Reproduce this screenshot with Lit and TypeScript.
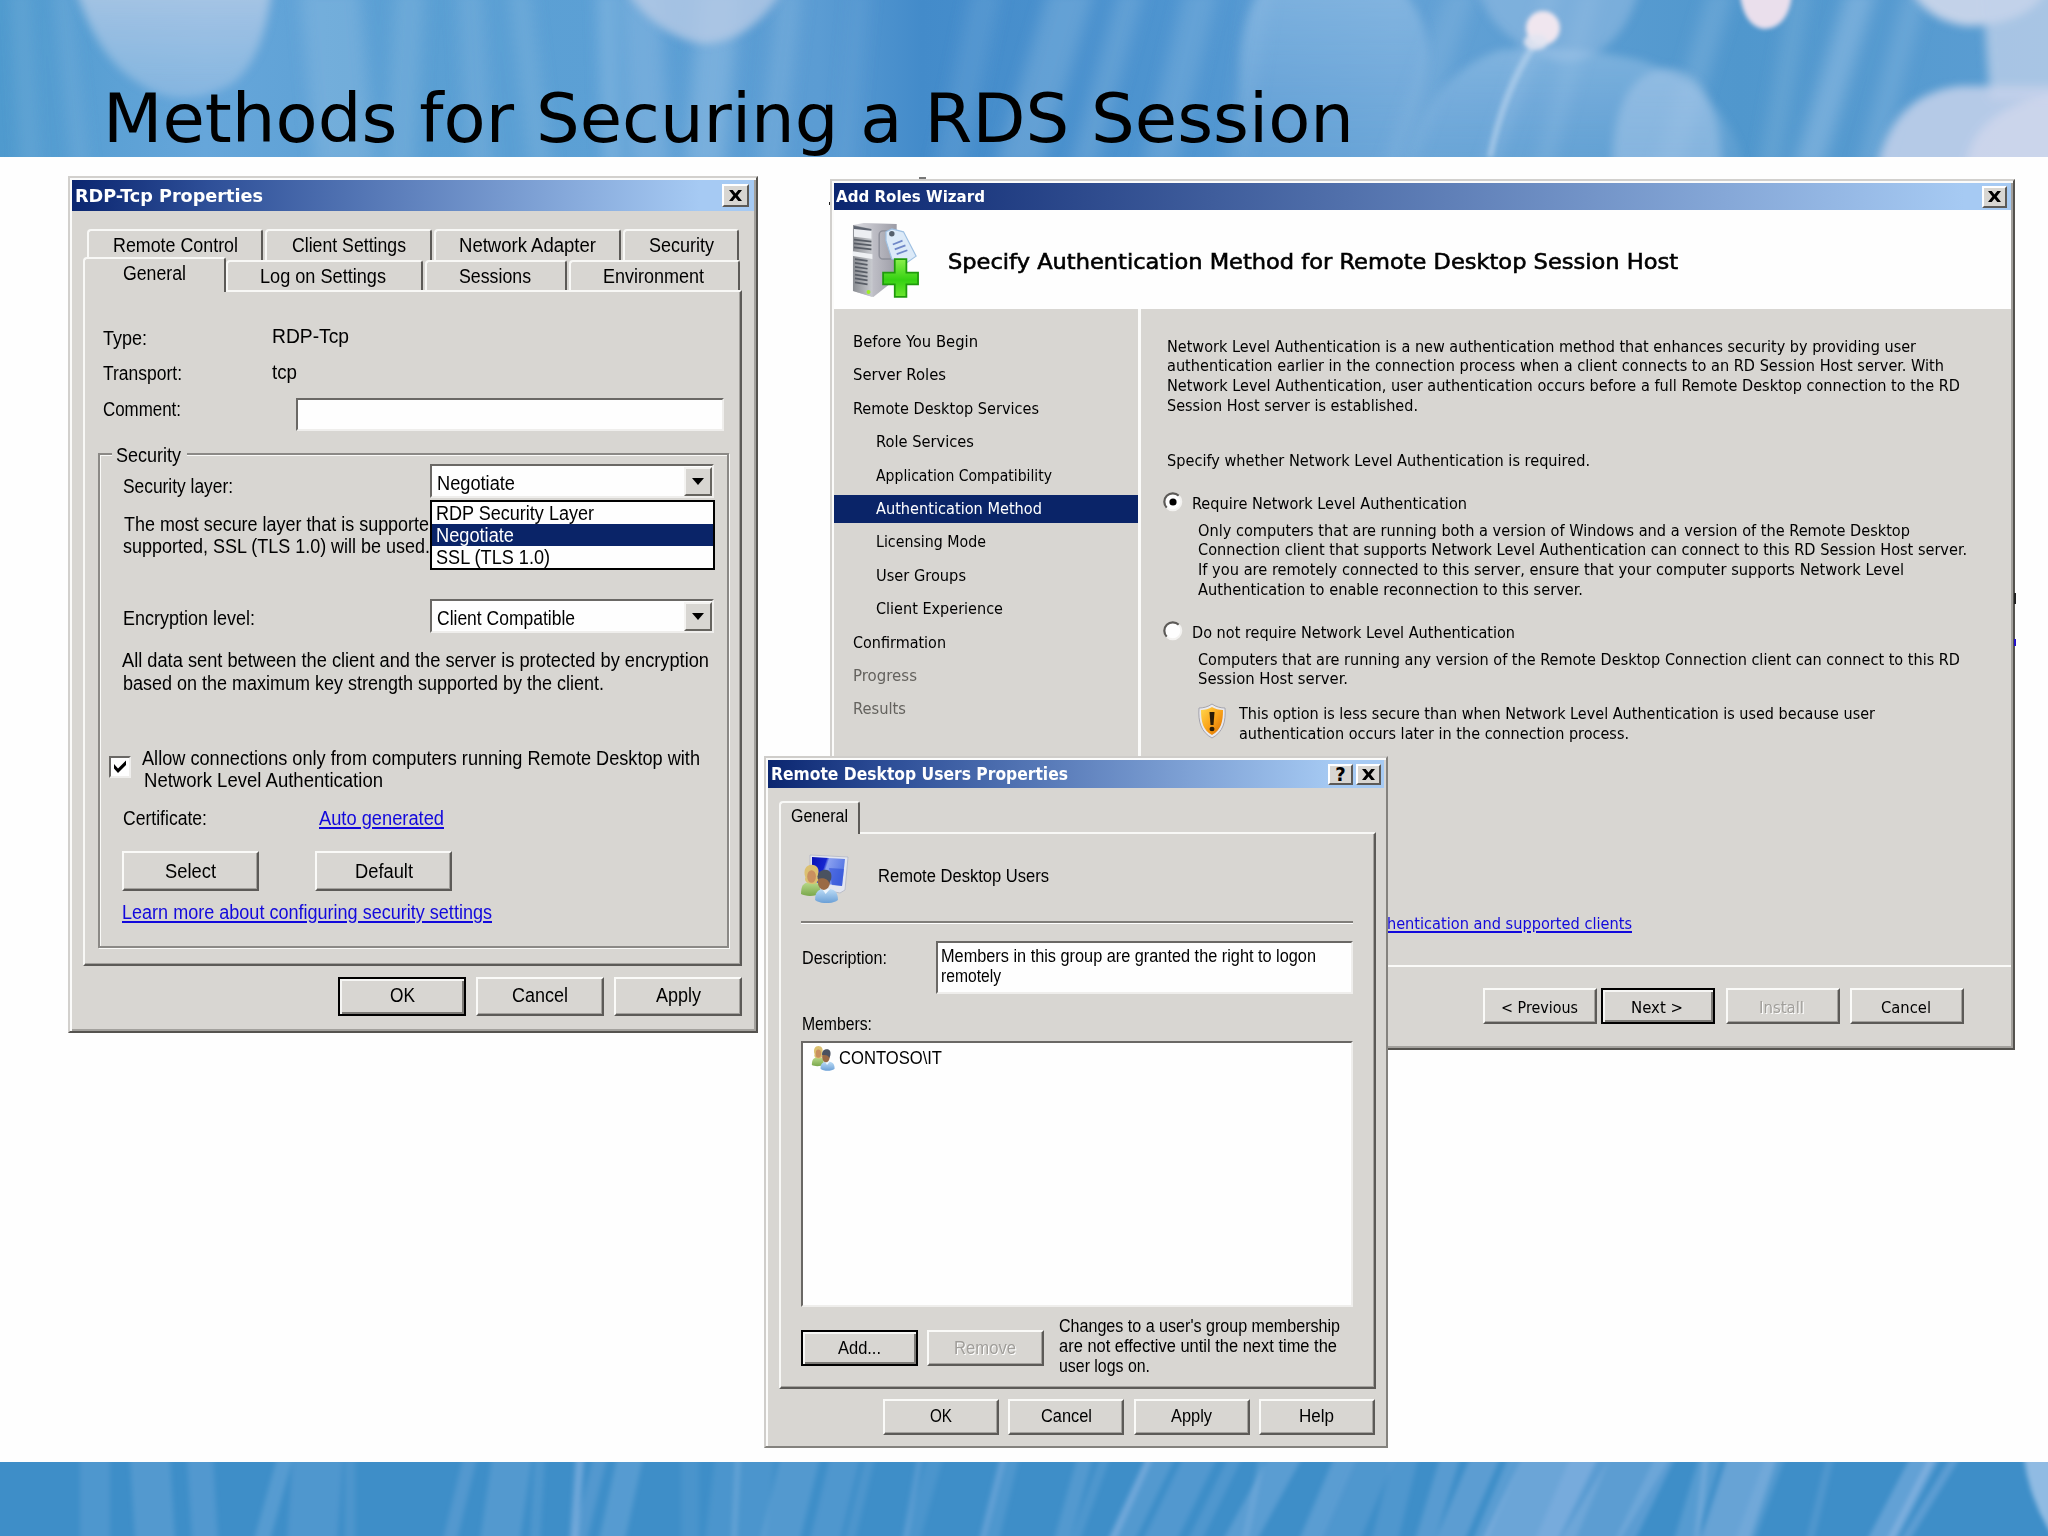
import { LitElement, html, svg, css } from "lit";
import { customElement, property } from "lit/decorators.js";

/* A single line of text squeezed or stretched to a given width. */
@customElement("fit-text")
class FitText extends LitElement {
  @property({ type: Number }) w = 0;
  @property({ type: Number }) indent = 0;
  @property({ type: Number }) gap = 0;
  static styles = css`
    :host { display: block; flex: none; white-space: nowrap; height: 22px; line-height: 22px; }
    .t { display: inline-block; transform-origin: 0 0; text-decoration: inherit; text-underline-offset: inherit; }
  `;
  render() { return html`<span class="t"><slot></slot></span>`; }
  updated() {
    this.style.width = `${this.w}px`;
    this.style.marginLeft = `${this.indent}px`;
    this.style.marginTop = `${this.gap}px`;
    this.fit();
    document.fonts.ready.then(() => this.fit());
  }
  fit() {
    const t = this.renderRoot.querySelector(".t") as HTMLElement;
    if (!t) return;
    t.style.transform = "none";
    const n = t.getBoundingClientRect().width;
    if (n > 0) t.style.transform = `scaleX(${this.w / n})`;
  }
}

const t = (text: string, w: number, indent = 0, gap = 0, cls = "") =>
  html`<fit-text class=${cls} .w=${w} .indent=${indent} .gap=${gap}>${text}</fit-text>`;

const btn = (text: string, w: number, cls = "") =>
  html`<div class="btn ${cls}">${t(text, w)}</div>`;

const closeGlyph = html`<svg class="glyph" viewBox="0 0 16 14"><path d="M1 1h4l3 3.800 3-3.800h4l-4.700 6 4.700 6h-4l-3-3.800-3 3.800H1l4.700-6z" fill="#000"/></svg>`;
const arrow = html`<span class="arrow"><svg width="12" height="8" viewBox="0 0 12 8"><path d="M0 0h12L6 7z" fill="#000"/></svg></span>`;

const people = (id: string) => svg`
  <defs>
    <linearGradient id="${id}g" x1="0" y1="0" x2="0" y2="1"><stop offset="0" stop-color="#b9d98a"/><stop offset="1" stop-color="#7aa84c"/></linearGradient>
    <linearGradient id="${id}b" x1="0" y1="0" x2="0" y2="1"><stop offset="0" stop-color="#bcdcf6"/><stop offset="1" stop-color="#6a9fd6"/></linearGradient>
  </defs>
  <path d="M0 37c0-10 3-13 8-14h9c3 1 5 4 5 13-5 4-17 4-22 1z" fill="url(#${id}g)"/>
  <path d="M5 17c-3-9 1-15 7-15s10 5 7 14c2 5-1 9-6 9s-10-3-8-8z" fill="#dcc070"/>
  <ellipse cx="12" cy="16" rx="5" ry="7.500" fill="#c9905f"/>
  <path d="M16 44c0-9 3-12 9-13h8c6 1 9 5 9 13-6 5-20 5-26 0z" fill="url(#${id}b)"/>
  <path d="M24 31l4 6 5-6z" fill="#eef6fc"/>
  <ellipse cx="26" cy="22" rx="7" ry="10" fill="#9a6a44"/>
  <path d="M19 19c-1-8 4-11 9-11s8 5 6 12l-2 4c-1-5-7-7-13-5z" fill="#4a5260"/>`;

const serverIcon = html`<svg class="server" viewBox="0 0 70 78">
  <defs>
    <linearGradient id="sf" x1="0" x2="1"><stop offset="0" stop-color="#8a8d92"/><stop offset="1" stop-color="#c9cbd0"/></linearGradient>
    <linearGradient id="ss" x1="0" x2="1"><stop offset="0" stop-color="#dcdce2"/><stop offset="1" stop-color="#9c9ca6"/></linearGradient>
    <linearGradient id="pg" x1="0" x2="0" y1="0" y2="1"><stop offset="0" stop-color="#8cf04c"/><stop offset=".55" stop-color="#35d112"/><stop offset="1" stop-color="#6be62e"/></linearGradient>
  </defs>
  <path d="M1 3L12 1l34 1v56L22 77 1 71z" fill="url(#ss)"/>
  <path d="M1 3l20 4v70L1 71z" fill="url(#sf)"/>
  <path d="M2 5l18 3v9L2 15z" fill="#eceef2"/><path d="M2 4l18 3v2L2 7z" fill="#5e6470"/>
  <path d="M2 18l18 2M2 22l18 2M2 26l18 2M3 38l13 2M3 42l13 2M3 46l13 2M3 50l13 2M3 54l13 2M3 58l13 2M3 62l13 2" stroke="#585d66" stroke-width="1.800"/>
  <path d="M1 30l20 3v5L1 35z" fill="#eef0f3"/>
  <circle cx="17" cy="72" r="2" fill="#9cf020"/>
  <rect x="28" y="9" width="18" height="29" rx="4" fill="none" stroke="#8c8e98" stroke-width="1.500"/>
  <path d="M35 10l6-3 12 3 13 25-10 7-15-4-6-19z" fill="#dceaf8" stroke="#9fc0e2" stroke-width="1.200"/>
  <circle cx="41" cy="12" r="2.800" fill="#55606c"/>
  <path d="M42 23l10-4M44 28l11-4M46 33l11-4" stroke="#7088c8" stroke-width="1.800"/>
  <path d="M44 38h12v14h12v12H56v13H44V64H32V52h12z" fill="url(#pg)" stroke="#1f9a0c" stroke-width="1.800"/>
</svg>`;

const shieldIcon = html`<svg class="shield" viewBox="0 0 30 36">
  <defs>
    <linearGradient id="sh" x1="0" x2="1" y1="0" y2="1"><stop offset="0" stop-color="#ffd850"/><stop offset=".5" stop-color="#fba51a"/><stop offset="1" stop-color="#d96c00"/></linearGradient>
  </defs>
  <path d="M15 1c4 3 9 4 13 4 1 14-2 24-13 30C4 29 1 19 2 5c4 0 9-1 13-4z" fill="#e9e9ee" stroke="#a4a4ae"/>
  <path d="M15 4c3 2 7 3 11 3 0 12-2 20-11 25C6 27 4 19 4 7c4 0 8-1 11-3z" fill="url(#sh)"/>
  <path d="M12.500 9h5l-1 13h-3z" fill="#2a1c08"/><ellipse cx="15" cy="26" rx="2.500" ry="2.300" fill="#2a1c08"/>
</svg>`;

/* [top x, bottom x, width, opacity] */
const topStreaks: number[][] = [
  [20, 30, 18, .18], [62, 80, 14, .2], [330, 345, 60, .28], [410, 400, 30, .24], [470, 480, 26, .2], [520, 540, 22, .22],
  [606, 612, 14, .45], [640, 650, 40, .3], [720, 705, 40, .38], [790, 770, 24, .24], [860, 845, 20, .1], [985, 950, 30, .16],
  [1070, 1020, 46, .28], [1130, 1085, 26, .24], [1200, 1160, 34, .24], [1260, 1235, 20, .18], [1460, 1400, 30, .2],
  [1550, 1490, 10, .4], [1590, 1545, 16, .25], [1720, 1670, 26, .25], [1800, 1770, 20, .22], [1860, 1810, 30, .4], [1915, 1870, 22, .25],
];
const bottomStreaks: number[][] = [
  [95, 95, 30, .2], [150, 155, 40, .26], [200, 205, 26, .24], [285, 262, 16, .3], [318, 312, 50, .22], [350, 350, 10, .18],
  [470, 450, 14, .25], [512, 500, 40, .26], [540, 535, 10, .2], [580, 574, 8, .6], [600, 580, 14, .25], [630, 612, 26, .3],
  [690, 690, 18, .14], [738, 734, 5, .4], [745, 735, 60, .16], [800, 780, 40, .26], [845, 825, 30, .22], [870, 850, 10, .18],
  [920, 905, 5, .35], [935, 912, 16, .16], [1003, 982, 6, .35], [1010, 990, 18, .2], [1085, 1062, 16, .26], [1105, 1075, 10, .2],
  [1150, 1112, 8, .6], [1165, 1125, 20, .26], [1200, 1160, 34, .24], [1235, 1195, 14, .22], [1285, 1240, 34, .34], [1262, 1245, 6, .3],
  [1345, 1310, 22, .34], [1375, 1340, 40, .22], [1405, 1385, 26, .22], [1450, 1425, 20, .32], [1485, 1450, 30, .36], [1515, 1480, 14, .34],
  [1560, 1520, 76, .55], [1590, 1555, 40, .35], [1640, 1590, 60, .36], [1665, 1625, 20, .35], [1710, 1685, 22, .3], [1706, 1697, 5, .5],
  [1752, 1725, 50, .5], [1775, 1745, 20, .26], [1830, 1810, 8, .22], [1925, 1882, 30, .45], [1932, 1890, 7, .6], [1955, 1905, 10, .35],
];
const streaks = (list: number[][], h: number, fill: string) =>
  list.map(([a, b, w, o]) => svg`<polygon points="${a - w / 2},-4 ${a + w / 2},-4 ${b + w / 2},${h + 4} ${b - w / 2},${h + 4}" fill=${fill} opacity=${o}/>`);

const header = html`<svg class="sky" viewBox="0 0 2048 157" preserveAspectRatio="none">
  <defs>
    <linearGradient id="hb"><stop offset="0" stop-color="#4f9ace"/><stop offset=".1" stop-color="#66a6da"/><stop offset=".2" stop-color="#5a9fd3"/><stop offset=".3" stop-color="#5ca0d5"/><stop offset=".4" stop-color="#5b9cd3"/><stop offset=".45" stop-color="#438bca"/><stop offset=".58" stop-color="#4f95d0"/><stop offset=".68" stop-color="#64a2d6"/><stop offset=".85" stop-color="#5097cd"/><stop offset="1" stop-color="#5c9ed3"/></linearGradient>
    <linearGradient id="fade" x1="0" x2="0" y1="0" y2="1"><stop offset="0" stop-color="#b9cde7"/><stop offset="1" stop-color="#9fc3e6" stop-opacity=".7"/></linearGradient>
    <linearGradient id="veil" x1="0" x2="0" y1="0" y2="1"><stop offset="0" stop-color="#a4c8ea"/><stop offset="1" stop-color="#86b5e0" stop-opacity=".4"/></linearGradient>
    <filter id="s1"><feGaussianBlur stdDeviation="8 3"/></filter>
    <filter id="s2"><feGaussianBlur stdDeviation="5 4"/></filter>
    <filter id="s4"><feGaussianBlur stdDeviation="2"/></filter>
  </defs>
  <rect width="2048" height="157" fill="url(#hb)"/>
  <g filter="url(#s1)">${streaks(topStreaks, 157, "#a9cbea")}</g>
  <g filter="url(#s2)">
    <path d="M75-12H272Q264 60 232 84Q180 112 140 84Q98 60 75-12z" fill="url(#fade)" opacity=".8"/>
    <path d="M624-12H784Q752 42 703 44Q655 36 624-12z" fill="#b6cbe6" opacity=".8"/>
    <path d="M1262-12H1400Q1430 20 1428 60Q1420 110 1390 170H1240V60Q1242 20 1262-12z" fill="url(#veil)" opacity=".5"/>
    <path d="M1478-12H1640Q1620 60 1560 62Q1490 40 1478-12z" fill="#9dc1e5" opacity=".5"/>
    <path d="M1405 172Q1425 76 1500 50Q1560 44 1640 60Q1730 90 1745 172z" fill="url(#veil)" opacity=".5"/>
    <path d="M1612 172Q1612 72 1668 68Q1720 74 1722 172z" fill="#abc9ea" opacity=".5"/>
    <path d="M1910-12H2048Q2030 25 1966 26Q1925 20 1910-12z" fill="#c9d5ea" opacity=".95"/>
    <path d="M1982-12H2068V100H1990z" fill="#c2d2ea" opacity=".75"/>
    <path d="M1876 172Q1890 94 1960 86H2068V172z" fill="#c6d2eb" opacity=".85"/>
    <path d="M1965 172Q1970 104 2068 92V172z" fill="#dcdcee" opacity=".55"/>
  </g>
  <g filter="url(#s4)">
    <path d="M1538 45Q1508 90 1493 157h-6Q1500 90 1530 45z" fill="#c6dcf1" opacity=".5"/>
    <ellipse cx="1543" cy="28" rx="17" ry="17" fill="#f0e6ef"/>
    <ellipse cx="1536" cy="42" rx="12" ry="8" fill="#e2e4f1" opacity=".9"/>
    <path d="M1740-5H1792Q1788 28 1764 29Q1744 26 1740-5z" fill="#eadfec"/>
  </g>
</svg>`;

const footer = html`<svg class="sea" viewBox="0 0 2048 74" preserveAspectRatio="none">
  <defs><filter id="s3"><feGaussianBlur stdDeviation="2.500 .5"/></filter></defs>
  <rect width="2048" height="74" fill="#3e8ec8"/>
  <g filter="url(#s3)">${streaks(bottomStreaks, 74, "#8fb8e4")}
    <path d="M2024-4h30v80Q2030 40 2024-4z" fill="#b4cfee" opacity=".7"/></g>
</svg>`;

const navItems: [string, number, string][] = [
  ["Before You Begin", 125, ""], ["Server Roles", 93, ""], ["Remote Desktop Services", 186, ""],
  ["Role Services", 98, "sub"], ["Application Compatibility", 176, "sub"], ["Authentication Method", 166, "sub on"],
  ["Licensing Mode", 110, "sub"], ["User Groups", 90, "sub"], ["Client Experience", 127, "sub"],
  ["Confirmation", 93, ""], ["Progress", 64, "dim"], ["Results", 53, "dim"],
];

@customElement("app-root")
class AppRoot extends LitElement {
  static styles = css`
    :host { display: block; width: 2048px; height: 1536px; }
    * { box-sizing: border-box; }
    .slide { position: relative; display: flex; flex-direction: column; width: 2048px; height: 1536px; background: #fefefe; overflow: hidden; color: #000; font: 19.5px "Liberation Sans", Arial, sans-serif; }
    .head { display: grid; height: 157px; flex: none; }
    .head > * { grid-area: 1 / 1; }
    .sky, .sea { display: block; width: 100%; height: 100%; }
    .title { margin: 0; font: 400 67.5px "DejaVu Sans", Verdana, sans-serif; padding: 78px 0 0 103px; height: 157px; z-index: 1; }
    .title fit-text { height: 80px; line-height: 81px; }
    .foot { height: 74px; margin-top: auto; flex: none; }
    .speck { position: absolute; background: #222; }
    .sp1 { left: 829px; top: 202px; width: 2px; height: 3px; }
    .sp2 { left: 919px; top: 177px; width: 7px; height: 2px; background: #777; }
    .sp3 { left: 2014px; top: 593px; width: 2px; height: 11px; }
    .sp4 { left: 2014px; top: 639px; width: 2px; height: 7px; background: #2412c8; }

    .win { position: absolute; display: flex; flex-direction: column; background: #d8d6d2; padding: 2px; border: 2px solid; border-color: #d2d0cd #55534f #55534f #d2d0cd; box-shadow: inset 2px 2px #fbfbfa, inset -2px -2px #a3a19d; }
    .w1 { left: 68px; top: 176px; width: 690px; height: 857px; }
    .w2 { left: 830px; top: 179px; width: 1185px; height: 871px; }
    .w3 { left: 764px; top: 756px; width: 624px; height: 692px; border-color: #cfcdca #84827e #84827e #cfcdca; box-shadow: inset 2px 2px #fbfbfa; font-size: 18.3px; }
    .bar { display: flex; align-items: center; flex: none; background: linear-gradient(90deg, #0b2670, #2e4f98 20%, #a6caf3 92%); color: #fff; font: 700 17px "DejaVu Sans Condensed", "DejaVu Sans", Tahoma, sans-serif; padding-left: 3px; }
    .w1 .bar { height: 31px; }
    .w2 .bar { height: 27px; font-size: 16.5px; background: linear-gradient(90deg, #0b2670, #a6caf3 96%); padding-left: 2px; }
    .w3 .bar { height: 28px; }
    .spacer { flex: 1; }
    .cap { display: flex; align-items: center; justify-content: center; width: 27px; height: 23px; background: #d8d6d2; border: 2px solid; border-color: #fff #5c5a57 #5c5a57 #fff; margin-right: 5px; color: #000; flex: none; }
    .w2 .cap { width: 25px; height: 22px; margin-right: 4px; }
    .w3 .cap { width: 25px; height: 21px; margin-right: 3px; font-size: 20px; }
    .glyph { width: 15px; height: 13px; }

    .tabs { display: flex; flex: none; }
    .tab { display: flex; justify-content: center; border: 2px solid; border-color: #f8f8f6 #5c5a57 transparent #f8f8f6; border-bottom: 0; border-radius: 4px 3px 0 0; background: #d8d6d2; flex: none; }
    .one { margin: 18px 0 0 15px; height: 31px; gap: 2px; }
    .one .tab { height: 31px; padding-top: 3px; }
    .one .a { width: 176px; } .one .b { width: 167px; } .one .c { width: 187px; } .one .d { width: 116px; }
    .two { margin-left: 11px; height: 30px; gap: 2px; }
    .two .tab { height: 30px; padding-top: 3px; }
    .two .front, .solo .front { z-index: 1; }
    .two .front { width: 143px; height: 35px; margin: -3px -2px 0 0; }
    .two .f { width: 197px; padding-right: 4px; } .two .g { width: 142px; padding-right: 2px; } .two .h { width: 171px; padding-right: 2px; }
    .page { display: flex; flex-direction: column; border: 2px solid; border-color: #f8f8f6 #5c5a57 #5c5a57 #f8f8f6; box-shadow: inset -1px -1px #a3a19d; flex: none; }
    .w1 .page { margin-left: 11px; width: 659px; height: 676px; padding-top: 33px; }
    .row { display: flex; align-items: flex-start; flex: none; }
    .col { display: flex; flex-direction: column; flex: none; }
    .h36 { height: 36px; } .h37 { height: 37px; }
    .h55 { height: 55px; }
    .h99 { height: 99px; } .h50 { height: 50px; } .h98 { height: 98px; } .h60 { height: 60px; } .h44 { height: 44px; }
    .field { background: #fefefe; border: 2px solid; border-color: #6a6865 #efeeec #efeeec #6a6865; outline: 0; flex: none; }
    .comment { width: 428px; height: 33px; margin-left: 115px; }
    .group { margin-left: 13px; width: 631px; height: 495px; border: 2px solid #8b8986; box-shadow: 1px 1px #fafaf8, inset 1px 1px #fafaf8; display: flex; flex-direction: column; flex: none; }
    .legend { background: #d8d6d2; width: 75px; margin: -11px 0 -2px 12px; height: 22px; flex: none; padding-left: 4px; }
    .combo { position: relative; display: flex; width: 284px; height: 34px; padding-left: 5px; align-items: flex-start; }
    .arrow { display: flex; align-items: center; justify-content: center; width: 28px; height: 29px; margin: 1px 0 0 auto; background: #d8d6d2; border: 2px solid; border-color: #f4f3f1 #66645f #66645f #f4f3f1; }
    .list { position: absolute; left: -2px; top: 34px; width: 285px; height: 70px; border: 2px solid #000; background: #fefefe; display: flex; flex-direction: column; z-index: 2; }
    .opt { height: 22px; padding-left: 4px; }
    .opt.on { background: #0a2468; color: #fff; }
    .check { width: 22px; height: 22px; margin: 9px 0 0 9px; border: 2px solid; border-color: #6a6865 #efeeec #efeeec #6a6865; background: #fefefe; flex: none; }
    .check svg { display: block; width: 18px; height: 18px; }
    .ln23 fit-text { height: 23px; }
    .link { color: #1208dc; text-decoration: underline 2px; text-underline-offset: 2px; }
    .btn { display: flex; align-items: center; justify-content: center; flex: none; padding-bottom: 1px; background: #d8d6d2; border: 2px solid; border-color: #fafaf8 #5c5a57 #5c5a57 #fafaf8; box-shadow: inset -1px -1px #a3a19d; }
    .btn.def { border-color: #000; box-shadow: inset 2px 2px #f6f6f4, inset -2px -2px #7d7b77; }
    .btn.off { color: #a09e9a; text-shadow: 1px 1px #fff; }
    .inner { gap: 56px; margin-left: 22px; height: 50px; }
    .inner .btn { width: 137px; height: 40px; }
    .w1 .acts { margin: 11px 0 0 266px; gap: 10px; }
    .w1 .acts .btn { width: 128px; height: 39px; padding-bottom: 3px; }

    .w2 { font: 15.8px "DejaVu Sans Condensed", "DejaVu Sans", Tahoma, sans-serif; }
    .banner { display: flex; height: 99px; background: #fefefe; flex: none; font: 21.5px "DejaVu Sans", sans-serif; -webkit-text-stroke: .6px #000; }
    .server { width: 68px; height: 76px; margin: 12px 0 0 18px; flex: none; -webkit-text-stroke: 0; }
    .body { display: flex; height: 658px; flex: none; border-bottom: 2px solid #fafaf8; }
    .nav { width: 307px; padding-top: 19px; border-right: 3px solid #fbfbfa; display: flex; flex-direction: column; gap: 5.400px; flex: none; }
    .item { height: 28px; padding: 3px 0 0 19px; flex: none; }
    .item.sub { padding-left: 42px; }
    .on { background: #0a2468; color: #fff; }
    .dim { color: #64625e; }
    .main { display: flex; flex-direction: column; padding: 26.500px 0 0 26px; }
    .ln fit-text { height: 19.800px; line-height: 22px; }
    .radio { width: 20px; height: 20px; margin-left: -4px; flex: none; }
    .shield { width: 30px; height: 36px; margin: 3px 0 0 30px; flex: none; }
    .p1 { height: 114px; } .p2 { height: 42px; } .p3 { height: 28px; } .p4 { height: 101px; } .p5 { height: 28px; } .p6 { height: 51px; } .p7 { height: 212px; }
    .w2 .acts { margin: 21px 0 0 649px; }
    .w2 .acts .btn { width: 114px; height: 36px; margin-right: 10.500px; padding: 4px 2px 0 0; }
    .w2 .acts .btn:first-child { margin-right: 4px; }

    .solo { margin: 13px 0 0 11px; height: 31px; }
    .solo .tab { width: 81px; height: 33px; padding-top: 2px; }
    .w3 .page { margin-left: 11px; width: 597px; height: 557px; padding: 20px 0 0 20px; }
    .users { width: 48px; height: 49px; flex: none; }
    .who { height: 67px; }
    .rule { width: 552px; height: 3px; background: #807e7a; border-bottom: 1px solid #fff; flex: none; }
    .desc { height: 72px; margin-top: 17px; flex: none; }
    .ln20 fit-text { height: 20px; line-height: 22px; }
    .note { width: 417px; height: 53px; padding: 2px 0 0 3px; margin-left: 49px; }
    .members { height: 28px; flex: none; }
    .box { width: 552px; height: 266px; display: flex; padding: 2px 0 0 7px; }
    .mini { width: 27px; height: 26px; flex: none; }
    .edit { margin-top: 7px; }
    .edit .btn { width: 117px; height: 36px; margin: 16px 8.500px 0 0; }
    .edit .col { padding-top: 1px; }
    .w3 .acts { margin: 10px 0 0 115px; gap: 9.300px; }
    .w3 .acts .btn { width: 116px; height: 36px; padding-bottom: 2px; }
  `;

  radio(on: boolean) {
    return html`<svg class="radio" viewBox="0 0 20 20"><circle cx="10" cy="10" r="8.500" fill="#fefefe"/>
      <path d="M3.800 15.800A8.300 8.300 0 0 1 15.800 3.800" fill="none" stroke="#5c5a57" stroke-width="2.200"/>
      <path d="M15.800 3.800A8.300 8.300 0 0 1 3.800 15.800" fill="none" stroke="#f3f2f0" stroke-width="2"/>
      ${on ? svg`<circle cx="10" cy="10" r="3.600" fill="#000"/>` : ""}</svg>`;
  }

  rdp() {
    return html`<section class="win w1">
      <div class="bar">${t("RDP-Tcp Properties", 188)}<span class="spacer"></span><span class="cap">${closeGlyph}</span></div>
      <div class="tabs one">
        <div class="tab a">${t("Remote Control", 125)}</div><div class="tab b">${t("Client Settings", 114)}</div>
        <div class="tab c">${t("Network Adapter", 137)}</div><div class="tab d">${t("Security", 65)}</div>
      </div>
      <div class="tabs two">
        <div class="tab front">${t("General", 63)}</div><div class="tab f">${t("Log on Settings", 126)}</div>
        <div class="tab g">${t("Sessions", 72)}</div><div class="tab h">${t("Environment", 101)}</div>
      </div>
      <div class="page">
        <div class="row h36">${t("Type:", 44, 18, 2)}${t("RDP-Tcp", 77, 125)}</div>
        <div class="row h37">${t("Transport:", 79, 18, 1)}${t("tcp", 25, 90)}</div>
        <div class="row h55">${t("Comment:", 78, 18)}<div class="field comment"></div></div>
        <div class="group">
          <div class="legend">${t("Security", 65)}</div>
          <div class="row h36">${t("Security layer:", 110, 23, 11)}
            <div class="row">${t("", 0, 197)}<div class="field combo">${t("Negotiate", 78, 0, 6)}${arrow}
              <div class="list">
                <div class="opt">${t("RDP Security Layer", 158)}</div>
                <div class="opt on">${t("Negotiate", 78)}</div>
                <div class="opt">${t("SSL (TLS 1.0)", 114)}</div>
              </div></div></div>
          </div>
          <div class="col h99">${t("The most secure layer that is supporte", 305, 24, 13)}${t("supported, SSL (TLS 1.0) will be used.", 307, 23)}</div>
          <div class="row h50">${t("Encryption level:", 132, 23, 8)}<div class="row">${t("", 0, 175)}<div class="field combo">${t("Client Compatible", 138, 0, 6)}${arrow}</div></div></div>
          <div class="col h98 ln23">${t("All data sent between the client and the server is protected by encryption", 587, 22)}${t("based on the maximum key strength supported by the client.", 481, 23)}</div>
          <div class="row h60"><div class="check"><svg viewBox="0 0 18 18"><path d="M3 6l4 4.500 8-8v4.500l-8 8-4-4.500z" fill="#000"/></svg></div>
            <div class="col">${t("Allow connections only from computers running Remote Desktop with", 558, 11)}${t("Network Level Authentication", 239, 13)}</div></div>
          <div class="row h44">${t("Certificate:", 84, 23)}${t("Auto generated", 125, 112, 0, "link")}</div>
          <div class="row inner">${btn("Select", 51)}${btn("Default", 58)}</div>
          ${t("Learn more about configuring security settings", 370, 22, 0, "link")}
        </div>
      </div>
      <div class="row acts">${btn("OK", 25, "def")}${btn("Cancel", 56)}${btn("Apply", 45)}</div>
    </section>`;
  }

  wizard() {
    return html`<section class="win w2">
      <div class="bar">${t("Add Roles Wizard", 149)}<span class="spacer"></span><span class="cap">${closeGlyph}</span></div>
      <div class="banner">${serverIcon}${t("Specify Authentication Method for Remote Desktop Session Host", 730, 28, 41)}</div>
      <div class="body">
        <nav class="nav">${navItems.map(([n, w, c]) => html`<div class="item ${c}">${t(n, w)}</div>`)}</nav>
        <div class="main">
          <div class="col ln p1">
            ${t("Network Level Authentication is a new authentication method that enhances security by providing user", 749)}
            ${t("authentication earlier in the connection process when a client connects to an RD Session Host server. With", 777)}
            ${t("Network Level Authentication, user authentication occurs before a full Remote Desktop connection to the RD", 793)}
            ${t("Session Host server is established.", 251)}
          </div>
          <div class="col p2">${t("Specify whether Network Level Authentication is required.", 423)}</div>
          <div class="row p3">${this.radio(true)}${t("Require Network Level Authentication", 275, 9, 1)}</div>
          <div class="col ln p4">
            ${t("Only computers that are running both a version of Windows and a version of the Remote Desktop", 712, 31)}
            ${t("Connection client that supports Network Level Authentication can connect to this RD Session Host server.", 769, 31)}
            ${t("If you are remotely connected to this server, ensure that your computer supports Network Level", 706, 31)}
            ${t("Authentication to enable reconnection to this server.", 385, 31)}
          </div>
          <div class="row p5">${this.radio(false)}${t("Do not require Network Level Authentication", 323, 9, 1)}</div>
          <div class="col ln p6">
            ${t("Computers that are running any version of the Remote Desktop Connection client can connect to this RD", 762, 31)}
            ${t("Session Host server.", 150, 31)}
          </div>
          <div class="row p7">${shieldIcon}<div class="col ln">
            ${t("This option is less secure than when Network Level Authentication is used because user", 636, 12, 3.5)}
            ${t("authentication occurs later in the connection process.", 390, 12)}
          </div></div>
          ${t("Authentication and supported clients", 270, 195, 1, "link")}
        </div>
      </div>
      <div class="row acts">${btn("< Previous", 77)}${btn("Next >", 52, "def")}${btn("Install", 45, "off")}${btn("Cancel", 50)}</div>
    </section>`;
  }

  users() {
    return html`<section class="win w3">
      <div class="bar">${t("Remote Desktop Users Properties", 297)}<span class="spacer"></span><span class="cap">?</span><span class="cap">${closeGlyph}</span></div>
      <div class="tabs solo"><div class="tab front">${t("General", 57)}</div></div>
      <div class="page">
        <div class="row who">
          <svg class="users" viewBox="0 0 48 49">
            <defs><linearGradient id="scr" x1="0" x2="1" y1="0" y2=".3"><stop offset="0" stop-color="#0a12b4"/><stop offset=".42" stop-color="#1626d0"/><stop offset=".5" stop-color="#8aa0f0"/><stop offset="1" stop-color="#5878e4"/></linearGradient></defs>
            <path d="M9 1l38 2-3 33-5 3-30-6z" fill="#e3e6ef" stroke="#b2b6c4" stroke-width=".8"/>
            <path d="M11 3l33 2-3 27-30-4z" fill="url(#scr)"/>
            <path d="M28 14l15 1-2 17-10-1z" fill="#2244d4" opacity=".5"/>
            <g transform="translate(0 9) scale(.88 .84)">${people("u")}</g>
          </svg>
          ${t("Remote Desktop Users", 171, 29, 11)}
        </div>
        <div class="rule"></div>
        <div class="row desc">${t("Description:", 85, 1, 6)}
          <div class="field note col ln20">${t("Members in this group are granted the right to logon", 375)}${t("remotely", 60)}</div></div>
        <div class="members">${t("Members:", 70, 1)}</div>
        <div class="field box"><svg class="mini" viewBox="0 0 43 48">${people("m")}</svg>${t("CONTOSO\\IT", 103, 2, 2)}</div>
        <div class="row edit">${btn("Add...", 43, "def")}${btn("Remove", 62, "off")}
          <div class="col ln20">${t("Changes to a user's group membership", 281, 7)}${t("are not effective until the next time the", 278, 7)}${t("user logs on.", 91, 7)}</div></div>
      </div>
      <div class="row acts">${btn("OK", 22)}${btn("Cancel", 51)}${btn("Apply", 41)}${btn("Help", 35)}</div>
    </section>`;
  }

  render() {
    return html`<div class="slide">
      <header class="head">${header}<h1 class="title">${t("Methods for Securing a RDS Session", 1251)}</h1></header>
      <i class="speck sp1"></i><i class="speck sp2"></i>
      ${this.rdp()}${this.wizard()}${this.users()}
      <i class="speck sp3"></i><i class="speck sp4"></i>
      <footer class="foot">${footer}</footer>
    </div>`;
  }
}
